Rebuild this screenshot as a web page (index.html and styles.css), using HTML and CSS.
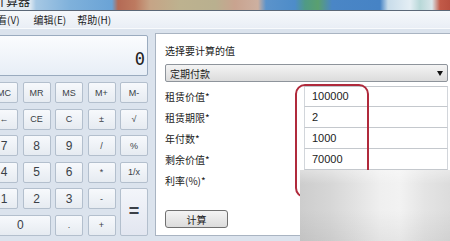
FILE: index.html
```html
<!DOCTYPE html>
<html>
<head>
<meta charset="utf-8">
<link rel="stylesheet" href="styles.css">
</head>
<body>
<div class="window">
  <div class="titlebar"><span class="title">计算器</span></div>
  <div class="menubar">
    <span class="menu m1">看(V)</span>
    <span class="menu">编辑(E)</span>
    <span class="menu">帮助(H)</span>
  </div>
  <div class="main">
    <div class="calc">
      <div class="display"><span class="num">0</span></div>
      <div class="keys">
        <div class="key sm">MC</div>
        <div class="key sm">MR</div>
        <div class="key sm">MS</div>
        <div class="key sm">M+</div>
        <div class="key sm">M-</div>
        <div class="key sm">←</div>
        <div class="key sm">CE</div>
        <div class="key sm">C</div>
        <div class="key sm">±</div>
        <div class="key sm">√</div>
        <div class="key">7</div>
        <div class="key">8</div>
        <div class="key">9</div>
        <div class="key sm">/</div>
        <div class="key sm">%</div>
        <div class="key">4</div>
        <div class="key">5</div>
        <div class="key">6</div>
        <div class="key sm">*</div>
        <div class="key sm">1/x</div>
        <div class="key">1</div>
        <div class="key">2</div>
        <div class="key">3</div>
        <div class="key sm">-</div>
        <div class="key eq">=</div>
        <div class="key zero">0</div>
        <div class="key sm">.</div>
        <div class="key sm">+</div>
      </div>
    </div>
    <div class="panel">
      <div class="heading">选择要计算的值</div>
      <div class="select"><span>定期付款</span><span class="arrow"></span></div>
      <div class="rows">
        <div class="row"><span class="label">租赁价值*</span><div class="field first">100000</div></div>
        <div class="row"><span class="label">租赁期限*</span><div class="field">2</div></div>
        <div class="row"><span class="label">年付数*</span><div class="field">1000</div></div>
        <div class="row"><span class="label">剩余价值*</span><div class="field">70000</div></div>
        <div class="row"><span class="label">利率(%)*</span><div class="field"></div></div>
      </div>
      <div class="btn">计算</div>
    </div>
  </div>
  <div class="mark"></div>
  <div class="blur"></div>
</div>
</body>
</html>
```

FILE: styles.css
```css
* { box-sizing: border-box; }
html, body { margin: 0; padding: 0; }
body {
  width: 450px;
  height: 241px;
  overflow: hidden;
  font-family: "Noto Sans CJK SC", "Noto Sans", sans-serif;
  color: #222;
  background: #dbe3ed;
}
.window {
  position: relative;
  width: 450px;
  height: 241px;
  overflow: hidden;
  background: #dbe3ed;
}
.titlebar {
  height: 11px;
  overflow: hidden;
  background: linear-gradient(90deg,
    #e6edf3 0px, #dfe9f2 30px, #a6c8e4 36px, #7fb1db 70px, #6aa3d6 112px,
    #b46a55 118px, #bd7a60 135px, #c6a486 150px, #bdb28f 180px, #b9b08f 215px,
    #c9a38f 235px, #cdb0a0 258px, #5b93cb 266px, #4d8cc9 295px,
    #4f9a86 305px, #5aa06f 318px, #4a86c6 332px, #4683c5 380px,
    #c8dcea 388px, #e4eef4 410px, #b8d8d8 420px, #d9e6ea 432px, #c25a48 440px, #b85040 450px);
  border-bottom: 1px solid #5b6777;
}
.title {
  display: block;
  margin-top: -6px;
  margin-left: -6px;
  font-size: 12px;
  line-height: 14px;
  color: #1a1a1a;
}
.menubar {
  height: 18px;
  display: flex;
  align-items: center;
  font-size: 10px;
  color: #1c1c1c;
  background: linear-gradient(#f6f8fb, #e9eef5);
  border-bottom: 1px solid #f8fafc;
}
.menu { margin-right: 11px; }
.m1 { margin-left: -3px; margin-right: 14px; }
.main {
  display: flex;
  align-items: flex-start;
  padding-top: 4px;
}
.calc {
  width: 158px;
  margin-left: -10px;
  flex: none;
  padding-top: 2px;
}
.display {
  height: 41px;
  border: 1px solid #9aabbf;
  border-radius: 2px;
  background: linear-gradient(#fbfcfe, #e7eef6);
  display: flex;
  align-items: flex-end;
  justify-content: flex-end;
  padding: 0 2px 7px 0;
}
.num {
  font-family: "DejaVu Sans Mono", monospace;
  font-size: 17px;
  line-height: 18px;
  color: #222;
}
.keys {
  margin-top: 6px;
  display: grid;
  grid-template-columns: repeat(5, 28px);
  grid-auto-rows: 21px;
  column-gap: 4.5px;
  row-gap: 5.5px;
}
.key {
  border: 1px solid #b3bfcd;
  border-radius: 2px;
  background: linear-gradient(#f7f9fc, #e6ebf1);
  display: flex;
  align-items: center;
  justify-content: center;
  font-family: "Liberation Sans", Arial, sans-serif;
  font-size: 12px;
  color: #3a3f47;
}
.key.sm { font-size: 9px; }
.key.eq {
  grid-row: span 2;
  font-size: 18px;
  font-weight: bold;
  background: linear-gradient(#f3f5fa, #e2e6f0);
}
.key.zero { grid-column: span 2; }
.panel {
  flex: 1;
  margin-left: 7px;
  margin-right: -12px;
  height: 203px;
  background: #fff;
  border: 1px solid #a9b4c2;
  padding: 9px 0 0 9px;
}
.heading {
  font-size: 10px;
  line-height: 15px;
}
.select {
  margin-top: 6px;
  width: 283px;
  height: 18px;
  border: 1px solid #8e949b;
  border-radius: 2px;
  background: linear-gradient(#f4f4f4, #dcdcdc);
  display: flex;
  align-items: center;
  justify-content: space-between;
  padding: 0 4px;
  font-size: 10px;
}
.arrow {
  width: 0;
  height: 0;
  border-left: 3.5px solid transparent;
  border-right: 3.5px solid transparent;
  border-top: 5px solid #111;
}
.rows { margin-top: 4px; }
.row {
  height: 21px;
  display: flex;
  align-items: center;
  justify-content: space-between;
  width: 283px;
}
.label { font-size: 10px; }
.field {
  width: 144px;
  height: 21px;
  border: 1px solid #d2d6db;
  border-top: none;
  border-bottom: 1px solid #c4c8cd;
  background: #fff;
  font-family: "Liberation Sans", Arial, sans-serif;
  font-size: 11px;
  line-height: 20px;
  padding-left: 7px;
  color: #222;
}
.field.first { border-top: 1px solid #c4c8cd; line-height: 19px; }
.btn {
  margin-top: 19px;
  width: 63px;
  height: 18px;
  border: 1px solid #707070;
  border-radius: 3px;
  background: linear-gradient(#f4f4f4, #dcdcdc);
  font-size: 10px;
  display: flex;
  align-items: center;
  justify-content: center;
}
.mark {
  position: absolute;
  left: 295px;
  top: 84px;
  width: 74px;
  height: 114px;
  border: 2px solid #b02a3c;
  border-radius: 10px;
}
.blur {
  position: absolute;
  left: 300px;
  top: 170px;
  width: 150px;
  height: 71px;
  background:
    linear-gradient(180deg, rgba(255,255,255,0.35) 0px, rgba(255,255,255,0) 14px, rgba(0,0,0,0) 40px, rgba(0,0,0,0.05) 71px),
    linear-gradient(90deg, #cdcdcd 0px, #d6d6d6 30px, #e2e2e2 55px, #efefef 80px, #f2f2f2 100px, #e4e4e4 125px, #dcdcdc 150px);
}
```
